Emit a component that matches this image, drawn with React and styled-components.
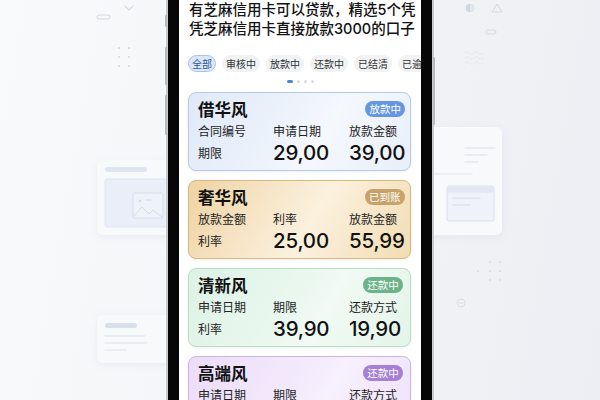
import React from "react";
import styled, { createGlobalStyle } from "styled-components";

const Global = createGlobalStyle`
  html, body { margin: 0; padding: 0; }
  body { font-family: "Inter", "Noto Sans CJK SC", sans-serif; }
`;

const Page = styled.div`
  position: relative;
  width: 600px;
  height: 400px;
  overflow: hidden;
  display: flex;
  justify-content: center;
  background: linear-gradient(100deg, #f9fafb 0%, #f4f5f8 45%, #eceef3 100%);
`;

const Deco = styled.svg`
  position: absolute;
  left: 0;
  top: 0;
  width: 600px;
  height: 400px;
`;

const WireCard = styled.div`
  position: absolute;
  left: ${(p) => p.$x}px;
  top: ${(p) => p.$y}px;
  width: ${(p) => p.$w}px;
  height: ${(p) => p.$h}px;
  border-radius: 6px;
  background: #f8f9fb;
  box-shadow: 0 2px 8px rgba(150, 160, 185, 0.12);
`;

const Phone = styled.div`
  position: relative;
  z-index: 2;
  width: 268px;
  height: 400px;
  box-sizing: border-box;
  border-left: 2px solid #c9cace;
  border-right: 2px solid #c9cace;
  background: #070707;
  padding: 0 11px;
  display: flex;
`;

const SideButton = styled.div`
  position: absolute;
  ${(p) => (p.$right ? "right: -3px;" : "left: -3px;")}
  top: ${(p) => p.$top}px;
  height: ${(p) => p.$h}px;
  width: 2px;
  border-radius: 1px;
  background: #b9babf;
`;

const Screen = styled.div`
  flex: 1;
  background: #ffffff;
  padding: 0 10px 0 10px;
  display: flex;
  flex-direction: column;
  overflow: hidden;
  & > * { flex: none; }
`;

const Title = styled.h1`
  margin: 0;
  font-family: "Inter", "Noto Sans CJK SC", sans-serif;
  font-size: 14.5px;
  line-height: 19px;
  font-weight: 500;
  color: #111;
  white-space: nowrap;
`;

const Tabs = styled.div`
  margin-top: 17px;
  margin-left: -1px;
  margin-right: -10px;
  height: 17px;
  display: flex;
  gap: 6px;
  overflow: hidden;
`;

const Tab = styled.div`
  flex: none;
  height: 17px;
  box-sizing: border-box;
  padding: 0 3px;
  border-radius: 9px;
  font-family: "Noto Sans CJK SC", sans-serif;
  font-size: 10px;
  line-height: 15px;
  border: 1px solid ${(p) => (p.$active ? "#a9c4e8" : "#f1f2f4")};
  background: ${(p) => (p.$active ? "#dbe7f7" : "#f1f2f4")};
  color: ${(p) => (p.$active ? "#2a5796" : "#333")};
`;

const Dots = styled.div`
  margin-top: 8px;
  height: 3px;
  display: flex;
  justify-content: center;
  gap: 4px;
`;

const Dot = styled.span`
  width: ${(p) => (p.$active ? 6 : 3)}px;
  height: 3px;
  border-radius: 2px;
  background: ${(p) => (p.$active ? "#4a86d8" : "#d7dae0")};
`;

const Cards = styled.div`
  margin-top: 9px;
  margin-left: -1px;
  display: flex;
  flex-direction: column;
  gap: 9px;
`;

const themes = {
  blue: {
    bg: "linear-gradient(120deg, #dfe9f8 0%, #eef3fb 45%, #f5f8fd 60%, #e8eff9 100%)",
    border: "#b6cae5",
    badge: "#6597e0",
  },
  gold: {
    bg: "linear-gradient(120deg, #efd3a2 0%, #f8e9cf 40%, #fbf1de 55%, #f2dcb2 100%)",
    border: "#d9b77f",
    badge: "#c9a26b",
  },
  green: {
    bg: "linear-gradient(120deg, #ddf2e5 0%, #ebf8f0 50%, #f1faf4 60%, #e3f4ea 100%)",
    border: "#b9dcc5",
    badge: "#6db38a",
  },
  purple: {
    bg: "linear-gradient(120deg, #ecdcf9 0%, #f4ebfc 50%, #f7f0fd 60%, #eee2fa 100%)",
    border: "#cdb4e6",
    badge: "#a67fd6",
  },
};

const Card = styled.div`
  flex: none;
  height: 79px;
  box-sizing: border-box;
  border-radius: 8px;
  border: 1px solid ${(p) => themes[p.$tone].border};
  background: ${(p) => themes[p.$tone].bg};
  padding: 8px 7px 0 9px;
  display: grid;
  grid-template-columns: 75px 76px 1fr;
  grid-template-rows: 19px 16px 24px;
  row-gap: 0;
  box-shadow: 0 1px 3px rgba(120, 130, 150, 0.12);
`;

const CardHead = styled.div`
  grid-column: 1 / -1;
  display: flex;
  align-items: center;
  justify-content: space-between;
  margin-bottom: 3px;
`;

const CardTitle = styled.div`
  font-family: "Noto Sans CJK SC", sans-serif;
  font-size: 16.5px;
  font-weight: 700;
  color: #111;
  line-height: 19px;
`;

const Badge = styled.div`
  width: 40px;
  height: 16px;
  border-radius: 8px;
  background: ${(p) => themes[p.$tone].badge};
  color: #fff;
  font-family: "Noto Sans CJK SC", sans-serif;
  font-size: 10.5px;
  line-height: 16px;
  text-align: center;
`;

const Label = styled.div`
  font-family: "Noto Sans CJK SC", sans-serif;
  font-size: 12px;
  line-height: 16px;
  color: #222;
  margin-top: 3px;
  white-space: nowrap;
`;

const RowLabel = styled(Label)`
  margin-top: 5px;
  line-height: 24px;
`;

const Value = styled.div`
  font-family: "Inter", sans-serif;
  font-size: 20.5px;
  font-weight: 500;
  line-height: 24px;
  margin-top: 5px;
  color: #111;
  letter-spacing: -0.2px;
  white-space: nowrap;
`;

const tabs = ["全部", "审核中", "放款中", "还款中", "已结清", "已逾期"];

const cards = [
  { tone: "blue", title: "借华风", badge: "放款中", labels: ["合同编号", "申请日期", "放款金额"], row: "期限", values: ["29,00", "39,00"] },
  { tone: "gold", title: "奢华风", badge: "已到账", labels: ["放款金额", "利率", "放款金额"], row: "利率", values: ["25,00", "55,99"] },
  { tone: "green", title: "清新风", badge: "还款中", labels: ["申请日期", "期限", "还款方式"], row: "利率", values: ["39,90", "19,90"] },
  { tone: "purple", title: "高端风", badge: "还款中", labels: ["申请日期", "期限", "还款方式"], row: "利率", values: ["29,90", "19,90"] },
];

const Line = ({ x1, x2, y, c = "#dde2ea", w = 1.2 }) => (
  <line x1={x1} x2={x2} y1={y} y2={y} stroke={c} strokeWidth={w} strokeLinecap="round" />
);

export default function App() {
  return (
    <>
      <Global />
      <Page>
        <WireCard $x={97} $y={160} $w={100} $h={75} />
        <WireCard $x={97} $y={315} $w={100} $h={48} />
        <WireCard $x={400} $y={127} $w={102} $h={108} />
        <Deco viewBox="0 0 600 400">
          <rect x="97" y="15" width="13" height="4" rx="2" fill="none" stroke="#d3d8e1" strokeWidth="1" />
          <polyline points="125,6 129,10 133,6" fill="none" stroke="#d3d8e1" strokeWidth="1.1" strokeLinecap="round" />
          {[119, 129].map((x) => [48, 57, 66].map((y) => <circle key={x + "-" + y} cx={x} cy={y} r="1" fill="#d3d7df" />))}
          <rect x="105" y="167" width="42" height="5" rx="2.5" fill="#dfe5f0" />
          <rect x="105" y="179" width="80" height="48" rx="2" fill="#e9eef8" stroke="#e0e6f1" />
          <rect x="133" y="193" width="30" height="25" rx="2" fill="#eef2f9" stroke="#d6deeb" />
          <polyline points="134,216 142,207 149,214 153,210 162,217" fill="none" stroke="#d6deeb" strokeWidth="1" />
          <circle cx="140" cy="201" r="1.3" fill="#d3dbe8" />
          <Line x1={146} x2={151} y={200} c="#d3dbe8" />
          <rect x="105" y="323" width="32" height="5" rx="2.5" fill="#d9dfeb" />
          <Line x1={105} x2={145} y={336} />
          <Line x1={105} x2={147} y={343} />
          <Line x1={105} x2={126} y={350} />
          <circle cx="470" cy="8" r="4" fill="#e3e7f0" stroke="#d5dae4" strokeWidth="0.8" />
          <path d="M470 4 A4 4 0 0 0 470 12 Z" fill="#d0d6e2" />
          <polygon points="497,4 502,12 492,12" fill="none" stroke="#d1d6df" strokeWidth="1" strokeLinejoin="round" />
          <rect x="486" y="30" width="10" height="4" rx="2" fill="none" stroke="#d3d8e1" strokeWidth="1" />
          {[53, 58, 63].map((y) => (
            <path key={y} d={`M465 ${y} q2.25 -2 4.5 0 t4.5 0 t4.5 0 t4.5 0`} fill="none" stroke="#dde1e8" strokeWidth="0.9" strokeDasharray="2 1" />
          ))}
          <Line x1={465} x2={495} y={148} c="#d9dee7" />
          <Line x1={465} x2={487} y={155} c="#d9dee7" />
          <Line x1={465} x2={478} y={162} c="#d9dee7" />
          <Line x1={420} x2={472} y={174} c="#e1e5ec" />
          <rect x="447" y="186" width="47" height="35" rx="2" fill="#eff3f9" stroke="#d8e0ec" />
          <rect x="447.5" y="186.5" width="46" height="6" fill="#e1e8f2" />
          <Line x1={453} x2={480} y={198} c="#d3dae6" />
          <Line x1={453} x2={470} y={205} c="#d3dae6" />
          {[[478, 271], [490, 262], [500, 262], [490, 271], [500, 271], [490, 280], [500, 280]].map(([x, y]) => (
            <circle key={x + "-" + y} cx={x} cy={y} r="1.1" fill="#d8dce4" />
          ))}
          <circle cx="461" cy="303" r="4" fill="none" stroke="#d7dbe3" strokeWidth="0.9" />
          <Line x1={459} x2={463} y={303} c="#d7dbe3" w={0.9} />
        </Deco>
        <Phone>
          <SideButton $top={15} $h={12} />
          <SideButton $top={47} $h={38} />
          <SideButton $top={95} $h={40} />
          <SideButton $right $top={57} $h={68} />
          <Screen>
            <Title>
              有芝麻信用卡可以贷款，精选5个凭
              <br />
              凭芝麻信用卡直接放款3000的口子
            </Title>
            <Tabs>
              {tabs.map((t, i) => (
                <Tab key={t} $active={i === 0}>{t}</Tab>
              ))}
            </Tabs>
            <Dots>
              <Dot $active />
              <Dot />
              <Dot />
              <Dot />
            </Dots>
            <Cards>
              {cards.map((c) => (
                <Card key={c.title} $tone={c.tone}>
                  <CardHead>
                    <CardTitle>{c.title}</CardTitle>
                    <Badge $tone={c.tone}>{c.badge}</Badge>
                  </CardHead>
                  {c.labels.map((l, i) => (
                    <Label key={i}>{l}</Label>
                  ))}
                  <RowLabel>{c.row}</RowLabel>
                  <Value>{c.values[0]}</Value>
                  <Value>{c.values[1]}</Value>
                </Card>
              ))}
            </Cards>
          </Screen>
        </Phone>
      </Page>
    </>
  );
}
